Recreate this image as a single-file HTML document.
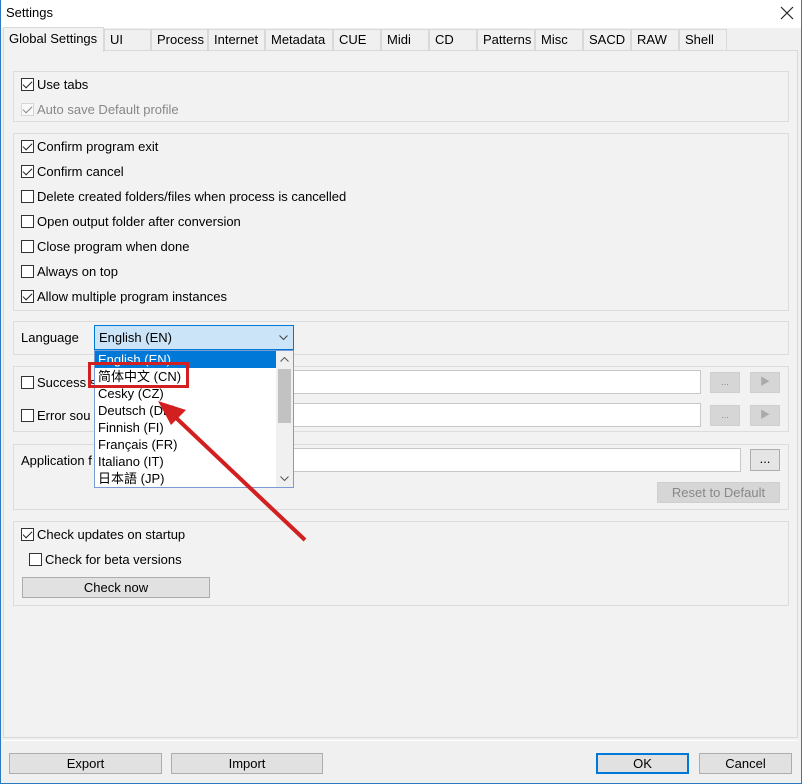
<!DOCTYPE html>
<html><head><meta charset="utf-8"><style>
*{box-sizing:border-box;margin:0;padding:0}
body{width:802px;height:784px;background:#f0f0f0;font-family:"Liberation Sans","Noto Sans CJK SC",sans-serif;font-size:13px;color:#000;position:relative;overflow:hidden}
.a{position:absolute}
.grp{position:absolute;left:13px;width:776px;border:1px solid #dcdcdc}
.cb{position:absolute;width:13px;height:13px;border:1px solid #333;background:#fff}
.cb.c::after{content:"";position:absolute;left:3px;top:0px;width:4px;height:8px;border:solid #222;border-width:0 1.5px 1.5px 0;transform:rotate(45deg)}
.lbl{position:absolute;white-space:nowrap}
.tab{position:absolute;top:29px;height:21px;border:1px solid #d9d9d9;border-bottom:none;background:#f0f0f0;padding:2px 0 0 5px}
.btn{position:absolute;height:21px;border:1px solid #adadad;background:#e1e1e1;text-align:center;line-height:19px}
.inp{position:absolute;height:24px;border:1px solid #c8c8c8;background:#fff}
.dis{position:absolute;border:1px solid #cfcfcf;background:#d6d6d6;color:#888}
.it{position:absolute;left:3px;height:17px;line-height:17px}
</style></head><body>
<div class="a" style="left:0;top:0;width:802px;height:28px;background:#fff"></div>
<div class="lbl" style="left:6px;top:5px">Settings</div>
<svg class="a" style="left:780px;top:6px" width="14" height="14"><path d="M1 1L13 13M13 1L1 13" stroke="#222" stroke-width="1.2"/></svg>
<div class="a" style="left:0;top:0;width:1px;height:784px;background:#2b7bbf"></div>
<div class="a" style="right:0;top:0;width:1px;height:784px;background:#2b7bbf"></div>
<div class="a" style="left:0;bottom:0;width:802px;height:1px;background:#2b7bbf"></div>
<div class="a" style="left:3px;top:50px;width:795px;height:688px;border:1px solid #d9d9d9;background:#f2f2f2"></div>
<div class="tab" style="left:104px;width:47px">UI</div>
<div class="tab" style="left:151px;width:57px">Process</div>
<div class="tab" style="left:208px;width:57px">Internet</div>
<div class="tab" style="left:265px;width:68px">Metadata</div>
<div class="tab" style="left:333px;width:48px">CUE</div>
<div class="tab" style="left:381px;width:48px">Midi</div>
<div class="tab" style="left:429px;width:48px">CD</div>
<div class="tab" style="left:477px;width:58px">Patterns</div>
<div class="tab" style="left:535px;width:48px">Misc</div>
<div class="tab" style="left:583px;width:48px">SACD</div>
<div class="tab" style="left:631px;width:48px">RAW</div>
<div class="tab" style="left:679px;width:48px">Shell</div>
<div class="tab" style="left:3px;top:27px;height:25px;width:101px;background:#f2f2f2;padding-top:3px">Global Settings</div>

<div class="grp" style="top:71px;height:51px"></div>
<div class="cb c" style="left:21px;top:78px"></div><div class="lbl" style="left:37px;top:77px">Use tabs</div>
<div class="cb c" style="left:21px;top:103px;border-color:#bbb;opacity:.5"></div><div class="lbl" style="left:37px;top:102px;color:#888">Auto save Default profile</div>

<div class="grp" style="top:133px;height:178px"></div>
<div class="cb c" style="left:21px;top:140px"></div><div class="lbl" style="left:37px;top:139px">Confirm program exit</div>
<div class="cb c" style="left:21px;top:165px"></div><div class="lbl" style="left:37px;top:164px">Confirm cancel</div>
<div class="cb" style="left:21px;top:190px"></div><div class="lbl" style="left:37px;top:189px">Delete created folders/files when process is cancelled</div>
<div class="cb" style="left:21px;top:215px"></div><div class="lbl" style="left:37px;top:214px">Open output folder after conversion</div>
<div class="cb" style="left:21px;top:240px"></div><div class="lbl" style="left:37px;top:239px">Close program when done</div>
<div class="cb" style="left:21px;top:265px"></div><div class="lbl" style="left:37px;top:264px">Always on top</div>
<div class="cb c" style="left:21px;top:290px"></div><div class="lbl" style="left:37px;top:289px">Allow multiple program instances</div>

<div class="grp" style="top:321px;height:34px"></div>
<div class="lbl" style="left:21px;top:330px">Language</div>
<div class="a" style="left:94px;top:325px;width:200px;height:25px;border:1px solid #0078d7;background:#cce4f7;padding:4px 0 0 4px">English (EN)<svg class="a" style="right:5px;top:9px" width="9" height="6"><path d="M0.5 0.5L4.5 4.5L8.5 0.5" stroke="#444" fill="none"/></svg></div>

<div class="grp" style="top:366px;height:66px"></div>
<div class="cb" style="left:21px;top:376px"></div><div class="lbl" style="left:37px;top:375px">Success s</div>
<div class="inp" style="left:290px;top:370px;width:411px"></div>
<div class="dis" style="left:710px;top:372px;width:30px;height:21px;text-align:center;font-size:9px;line-height:19px">...</div>
<div class="dis" style="left:750px;top:372px;width:30px;height:21px;text-align:center;font-size:10px;line-height:19px;color:#aaa">▶</div>
<div class="cb" style="left:21px;top:409px"></div><div class="lbl" style="left:37px;top:408px">Error sou</div>
<div class="inp" style="left:290px;top:403px;width:411px"></div>
<div class="dis" style="left:710px;top:405px;width:30px;height:21px;text-align:center;font-size:9px;line-height:19px">...</div>
<div class="dis" style="left:750px;top:405px;width:30px;height:21px;text-align:center;font-size:10px;line-height:19px;color:#aaa">▶</div>

<div class="grp" style="top:444px;height:66px"></div>
<div class="lbl" style="left:21px;top:453px">Application f</div>
<div class="inp" style="left:290px;top:448px;width:451px"></div>
<div class="btn" style="left:750px;top:449px;width:30px;height:22px;line-height:17px;background:#e5e5e5">...</div>
<div class="dis" style="left:657px;top:482px;width:123px;height:21px;text-align:center;line-height:19px">Reset to Default</div>

<div class="grp" style="top:521px;height:85px"></div>
<div class="cb c" style="left:21px;top:528px"></div><div class="lbl" style="left:37px;top:527px">Check updates on startup</div>
<div class="cb" style="left:29px;top:553px"></div><div class="lbl" style="left:45px;top:552px">Check for beta versions</div>
<div class="btn" style="left:22px;top:577px;width:188px">Check now</div>

<div class="a" style="left:94px;top:350px;width:200px;height:138px;border:1px solid #7a9cd3;background:#fff">
<div class="a" style="left:0;top:0;width:181px;height:17px;background:#0078d7"></div>
<div class="it" style="top:0;color:#fff">English (EN)</div>
<div class="it" style="top:17px">简体中文 (CN)</div>
<div class="it" style="top:34px">Cesky (CZ)</div>
<div class="it" style="top:51px">Deutsch (DE)</div>
<div class="it" style="top:68px">Finnish (FI)</div>
<div class="it" style="top:85px">Français (FR)</div>
<div class="it" style="top:102px">Italiano (IT)</div>
<div class="it" style="top:119px">日本語 (JP)</div>
<div class="a" style="left:181px;top:0;width:17px;height:136px;background:#f0f0f0"></div>
<div class="a" style="left:183px;top:18px;width:13px;height:54px;background:#c2c2c2"></div>
<svg class="a" style="left:185px;top:6px" width="9" height="6"><path d="M0.5 4.5L4.5 0.5L8.5 4.5" stroke="#555" fill="none"/></svg>
<svg class="a" style="left:185px;top:125px" width="9" height="6"><path d="M0.5 0.5L4.5 4.5L8.5 0.5" stroke="#555" fill="none"/></svg>
</div>

<div class="a" style="left:88px;top:362px;width:101px;height:26px;border:3px solid #d21f1f"></div>
<svg class="a" style="left:0;top:0" width="802" height="784"><line x1="305" y1="540" x2="172" y2="414" stroke="#d21f1f" stroke-width="4"/><polygon points="158,401 186,410 171,425" fill="#d21f1f"/></svg>

<div class="a" style="left:3px;top:740px;width:795px;height:1px;background:#fff"></div>
<div class="btn" style="left:9px;top:753px;width:153px">Export</div>
<div class="btn" style="left:171px;top:753px;width:152px">Import</div>
<div class="btn" style="left:596px;top:753px;width:93px;border:2px solid #0078d7;line-height:17px">OK</div>
<div class="btn" style="left:699px;top:753px;width:93px">Cancel</div>
</body></html>
